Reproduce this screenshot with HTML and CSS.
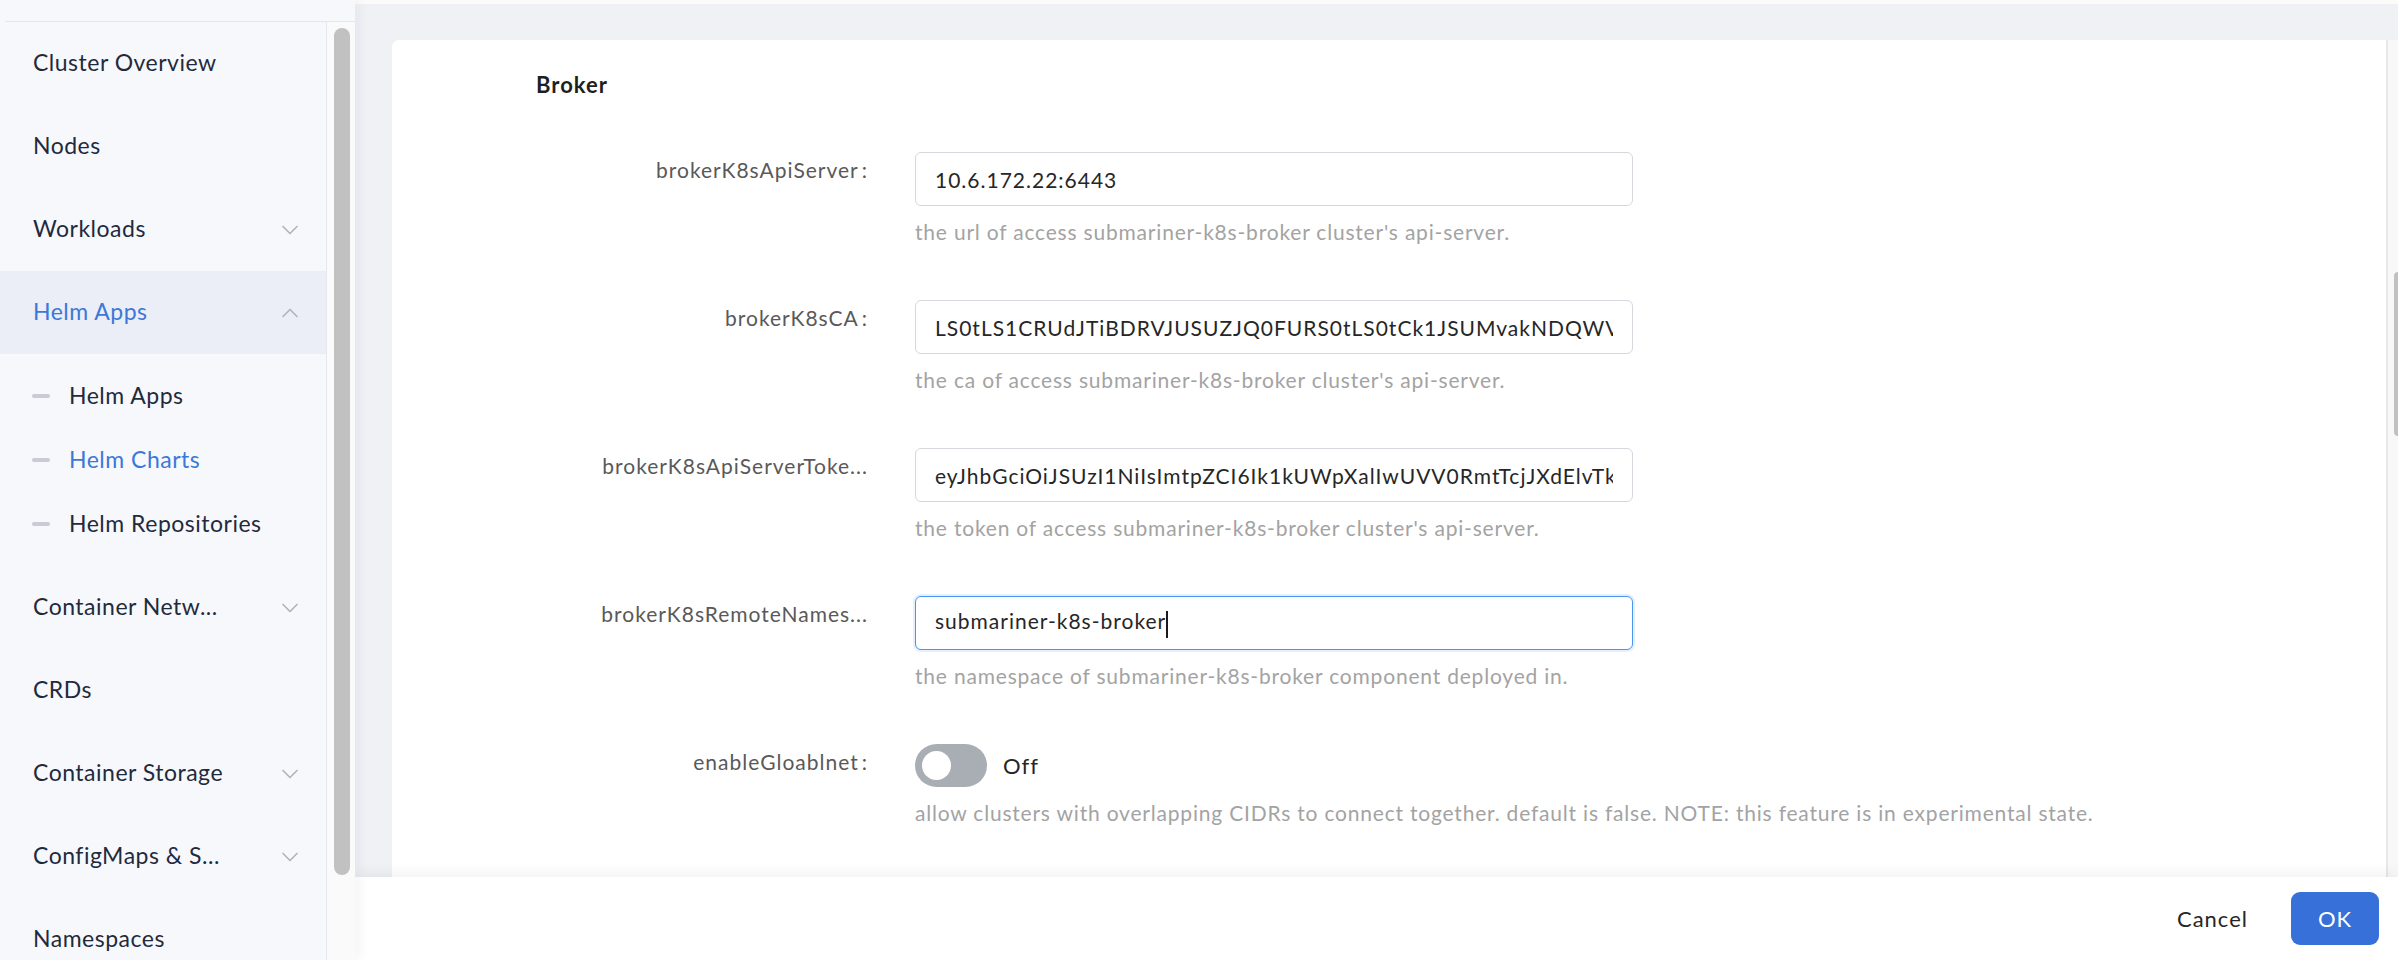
FILE: index.html
```html
<!DOCTYPE html>
<html lang="en">
<head>
<meta charset="utf-8">
<title>Helm Chart Install</title>
<link rel="stylesheet" href="styles.css">
</head>
<body>
<div class="app">
  <aside class="side">
    <div class="side-top"></div>
    <div class="side-body">
      <nav class="nav">
        <div class="item"><span class="txt">Cluster Overview</span></div>
        <div class="item"><span class="txt">Nodes</span></div>
        <div class="item"><span class="txt">Workloads</span><svg class="chev" viewBox="0 0 16 10"><polyline points="1,1.5 8,8.5 15,1.5"/></svg></div>
        <div class="item active"><span class="txt">Helm Apps</span><svg class="chev" viewBox="0 0 16 10"><polyline points="1,8.5 8,1.5 15,8.5"/></svg></div>
        <div class="sub">
          <div class="sub-item"><i class="dash"></i><span>Helm Apps</span></div>
          <div class="sub-item active"><i class="dash"></i><span>Helm Charts</span></div>
          <div class="sub-item"><i class="dash"></i><span>Helm Repositories</span></div>
        </div>
        <div class="item"><span class="txt">Container Netw...</span><svg class="chev" viewBox="0 0 16 10"><polyline points="1,1.5 8,8.5 15,1.5"/></svg></div>
        <div class="item"><span class="txt">CRDs</span></div>
        <div class="item"><span class="txt">Container Storage</span><svg class="chev" viewBox="0 0 16 10"><polyline points="1,1.5 8,8.5 15,1.5"/></svg></div>
        <div class="item"><span class="txt">ConfigMaps &amp; S...</span><svg class="chev" viewBox="0 0 16 10"><polyline points="1,1.5 8,8.5 15,1.5"/></svg></div>
        <div class="item"><span class="txt">Namespaces</span></div>
      </nav>
      <div class="track"><div class="thumb"></div></div>
    </div>
  </aside>

  <main class="main">
    <div class="main-top"></div>
    <div class="card-wrap">
      <section class="card">
        <h2 class="title">Broker</h2>
        <div class="form">
          <div class="row">
            <label class="label">brokerK8sApiServer<span class="colon">:</span></label>
            <div class="field">
              <div class="input"><span class="val">10.6.172.22:6443</span></div>
              <div class="hint">the url of access submariner-k8s-broker cluster's api-server.</div>
            </div>
          </div>
          <div class="row">
            <label class="label">brokerK8sCA<span class="colon">:</span></label>
            <div class="field">
              <div class="input"><span class="val">LS0tLS1CRUdJTiBDRVJUSUZJQ0FURS0tLS0tCk1JSUMvakNDQWVhZ0F3SUJBZ0lCQURBTkJna3Foa2lHOXcwQkFRc0ZBREFWTVJNd0VRWURWUVFERXdwcmRXSmwK</span></div>
              <div class="hint">the ca of access submariner-k8s-broker cluster's api-server.</div>
            </div>
          </div>
          <div class="row">
            <label class="label">brokerK8sApiServerToke...</label>
            <div class="field">
              <div class="input"><span class="val">eyJhbGciOiJSUzI1NiIsImtpZCI6Ik1kUWpXalIwUVV0RmtTcjJXdElvTk5qN3hTbVJZc0F3RWdOcmh3</span></div>
              <div class="hint">the token of access submariner-k8s-broker cluster's api-server.</div>
            </div>
          </div>
          <div class="row">
            <label class="label">brokerK8sRemoteNames...</label>
            <div class="field">
              <div class="input focused"><span class="val">submariner-k8s-broker<i class="caret"></i></span></div>
              <div class="hint">the namespace of submariner-k8s-broker component deployed in.</div>
            </div>
          </div>
          <div class="row">
            <label class="label">enableGloablnet<span class="colon">:</span></label>
            <div class="field">
              <div class="switch-line">
                <span class="switch"><i class="knob"></i></span>
                <span class="switch-text">Off</span>
              </div>
              <div class="hint">allow clusters with overlapping CIDRs to connect together. default is false. NOTE: this feature is in experimental state.</div>
            </div>
          </div>
        </div>
      </section>
      <div class="vbar"><div class="vthumb"></div></div>
    </div>
    <footer class="footer">
      <button class="btn-cancel">Cancel</button>
      <button class="btn-ok">OK</button>
    </footer>
  </main>
</div>
</body>
</html>
```

FILE: styles.css
```css
* { box-sizing: border-box; }
html, body { margin: 0; padding: 0; }
body {
  font-family: "Lato", "Noto Sans", sans-serif;
  background: #ffffff;
  width: 2398px;
  height: 960px;
  overflow: hidden;
}
.app {
  display: flex;
  height: 960px;
}

/* ---------- sidebar ---------- */
.side {
  width: 355px;
  flex: none;
  display: flex;
  flex-direction: column;
  background: #f7f8fc;
  box-shadow: 3px 0 12px rgba(20, 30, 60, 0.06);
  z-index: 2;
}
.side-top {
  height: 22px;
  flex: none;
  border-bottom: 1px solid #e4e6ec;
  margin-left: 5px;
}
.side-body {
  flex: 1;
  display: flex;
  min-height: 0;
}
.nav {
  width: 327px;
  flex: none;
  border-right: 1px solid #e6e8ed;
  overflow: hidden;
}
.item {
  height: 83px;
  display: flex;
  align-items: center;
  justify-content: space-between;
  padding: 0 28px 3px 33px;
  font-size: 23px;
  letter-spacing: 0.5px;
  color: #1f2b3d;
}
.item.active {
  background: #ebeef6;
  color: #3b78d8;
}
.txt { white-space: nowrap; }
.chev {
  width: 16px;
  height: 10px;
  margin-top: 3px;
  fill: none;
  stroke: #b1b5bd;
  stroke-width: 1.7;
  stroke-linecap: round;
  stroke-linejoin: round;
}
.sub { padding: 10px 0; }
.sub-item {
  height: 64px;
  display: flex;
  align-items: center;
  padding: 0 0 2px 32px;
  font-size: 23px;
  letter-spacing: 0.5px;
  color: #1f2b3d;
}
.sub-item.active { color: #3b78d8; }
.dash {
  width: 18px;
  height: 4px;
  margin-top: 2px;
  border-radius: 2px;
  background: #c9ccd4;
  margin-right: 19px;
}
.track {
  flex: 1;
  background: #fafafa;
  padding: 6px 5px 0 7px;
}
.thumb {
  width: 16px;
  height: 847px;
  border-radius: 8px;
  background: #c1c1c1;
}

/* ---------- main ---------- */
.main {
  flex: 1;
  display: flex;
  flex-direction: column;
  background: #f0f1f5;
  min-width: 0;
}
.main-top {
  height: 4px;
  flex: none;
  background: #fcfbfa;
}
.card-wrap {
  flex: 1;
  display: flex;
  margin: 36px 0 0 37px;
  min-height: 0;
}
.card {
  flex: 1;
  background: #ffffff;
  border-top-left-radius: 7px;
  padding: 30px 0 0 144px;
  overflow: hidden;
}
.vbar {
  width: 12px;
  flex: none;
  background: #f8f8f8;
  border-left: 2px solid #e8e8e8;
  padding-top: 232px;
  padding-left: 6px;
}
.vthumb {
  width: 4px;
  height: 164px;
  background: #c1c1c1;
  border-radius: 4px 0 0 4px;
}
.title {
  margin: 0 0 52px;
  font-size: 22px;
  line-height: 30px;
  font-weight: 700;
  letter-spacing: 1px;
  color: #1f1f1f;
}
.form { margin-left: 54px; }
.row {
  display: flex;
  align-items: flex-start;
  margin-bottom: 53px;
}
.label {
  width: 278px;
  flex: none;
  margin-right: 47px;
  text-align: right;
  font-size: 21px;
  letter-spacing: 1px;
  line-height: 36px;
  color: #595959;
  white-space: nowrap;
  overflow: hidden;
  text-overflow: ellipsis;
}
.colon { margin-left: 3px; }
.field { width: 718px; flex: none; }
.input {
  height: 54px;
  border: 1.5px solid #d5d7dc;
  border-radius: 6px;
  padding: 0 19px;
  display: flex;
  align-items: center;
  font-size: 21px;
  letter-spacing: 1px;
  color: #262626;
  background: #fff;
}
.input.focused {
  border-color: #4a95ee;
  box-shadow: 0 0 0 2px rgba(64, 150, 255, 0.14);
}
.val {
  display: block;
  flex: 1;
  min-width: 0;
  overflow: hidden;
  white-space: nowrap;
}
.caret {
  display: inline-block;
  width: 2px;
  height: 27px;
  background: #1a1a1a;
  vertical-align: middle;
  margin-left: 0;
}
.hint {
  margin-top: 11px;
  font-size: 21px;
  letter-spacing: 0.8px;
  line-height: 30px;
  color: #a3a3a3;
  white-space: nowrap;
}
.switch-line {
  height: 43px;
  display: flex;
  align-items: center;
}
.switch {
  width: 72px;
  height: 43px;
  border-radius: 22px;
  background: #a9aeb5;
  display: flex;
  align-items: center;
  padding-left: 7px;
}
.knob {
  width: 29px;
  height: 29px;
  border-radius: 50%;
  background: #ffffff;
}
.switch-text {
  margin-left: 16px;
  font-size: 22px;
  letter-spacing: 1px;
  color: #262626;
}

/* ---------- footer ---------- */
.footer {
  height: 83px;
  flex: none;
  background: #ffffff;
  display: flex;
  align-items: center;
  justify-content: flex-end;
  padding-right: 19px;
  box-shadow: 0 -5px 12px rgba(0, 0, 0, 0.05);
  position: relative;
  z-index: 1;
}
.btn-cancel {
  font-family: inherit;
  font-size: 22px;
  letter-spacing: 1px;
  color: #262626;
  background: transparent;
  border: none;
  height: 53px;
  padding: 0 23px;
  margin-right: 20px;
}
.btn-ok {
  font-family: inherit;
  font-size: 22px;
  letter-spacing: 1px;
  color: #ffffff;
  background: #3670d8;
  border: none;
  width: 88px;
  height: 53px;
  border-radius: 9px;
}
```
